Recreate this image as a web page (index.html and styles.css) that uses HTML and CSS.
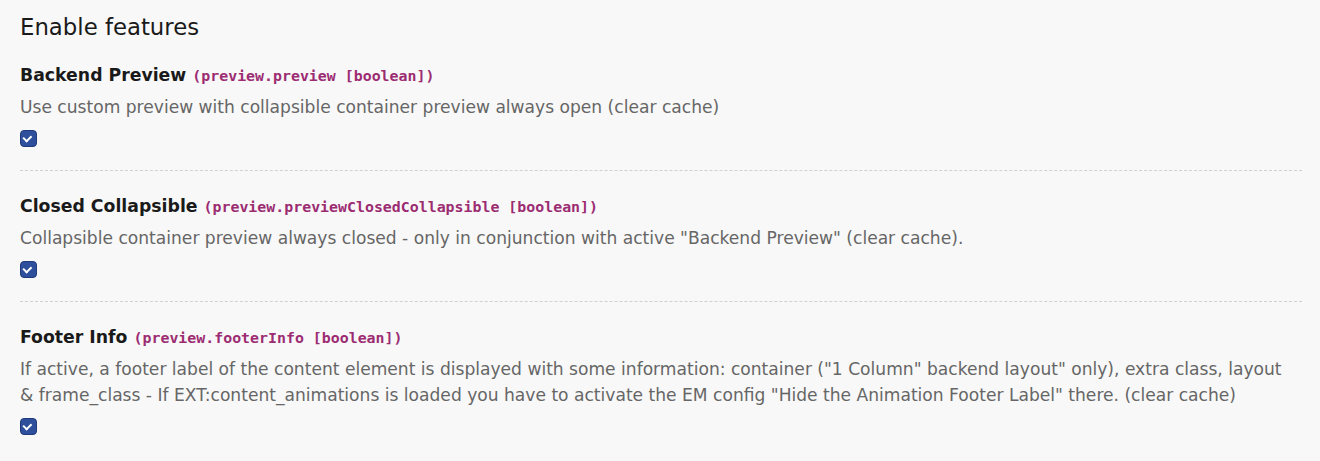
FILE: index.html
```html
<!DOCTYPE html>
<html lang="en">
<head>
    <meta charset="UTF-8">
    <title>Enable features</title>
    <link rel="stylesheet" href="styles.css">
</head>
<body>
    <div class="container">
        <h2>Enable features</h2>

        <div class="item">
            <label class="label" for="preview">Backend Preview <code>(preview.preview [boolean])</code></label>
            <p class="desc">Use custom preview with collapsible container preview always open (clear cache)</p>
            <input type="checkbox" id="preview" checked>
        </div>

        <div class="item">
            <label class="label" for="closed">Closed Collapsible <code>(preview.previewClosedCollapsible [boolean])</code></label>
            <p class="desc">Collapsible container preview always closed - only in conjunction with active "Backend Preview" (clear cache).</p>
            <input type="checkbox" id="closed" checked>
        </div>

        <div class="item">
            <label class="label" for="footer">Footer Info <code>(preview.footerInfo [boolean])</code></label>
            <p class="desc">If active, a footer label of the content element is displayed with some information: container ("1 Column" backend layout" only), extra class, layout &amp; frame_class - If EXT:content_animations is loaded you have to activate the EM config "Hide the Animation Footer Label" there. (clear cache)</p>
            <input type="checkbox" id="footer" checked>
        </div>
    </div>
</body>
</html>
```

FILE: styles.css
```css
body { margin: 0; background: #f8f8f8; font-family: "DejaVu Sans", Verdana, sans-serif; color: #1a1a1a; }
.container { padding: 11px 18px 0 20px; }
h2 { font-size: 22.8px; font-weight: normal; margin: 0 0 20px; line-height: 32px; }
.item { padding: 0 0 23px; border-bottom: 1px dashed #d0d0d0; margin-bottom: 23px; }
.item:last-child { border-bottom: none; }
.label { display: block; font-size: 17.3px; font-weight: bold; line-height: 24px; margin-bottom: 6px; }
.label code { font-family: "DejaVu Sans Mono", monospace; font-size: 14.9px; color: #9c2c72; }
.desc { margin: 0 0 10px; padding-right: 8px; font-size: 17.1px; line-height: 26px; color: #666; }
input[type=checkbox] { appearance: none; width: 17px; height: 17px; margin: 0; display: block; border-radius: 4px; background: #2d4f9c; border: 1px solid #1e3a7a; box-sizing: border-box; position: relative; }
input[type=checkbox]:checked::after { content: ""; position: absolute; top: 4px; left: 3px; width: 6px; height: 4px; border-left: 2px solid #fff; border-bottom: 2px solid #fff; transform: rotate(-45deg); transform-origin: 40% 60%; }
```
